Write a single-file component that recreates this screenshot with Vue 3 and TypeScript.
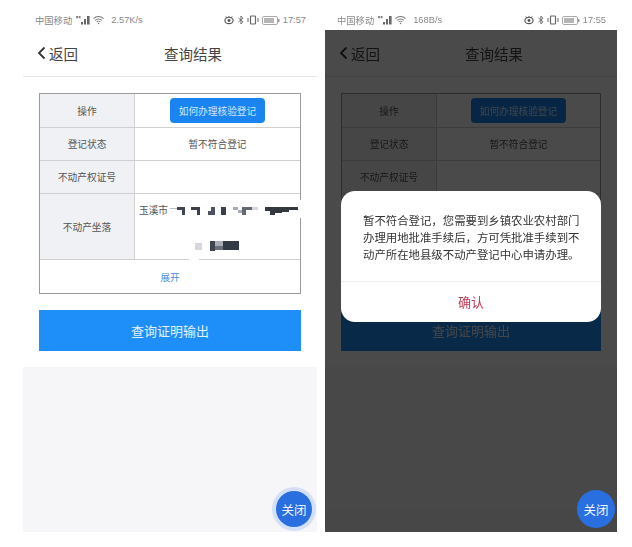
<script setup lang="ts">
interface Phone {
  speed: string
  time: string
  dimmed: boolean
}

const phones: Phone[] = [
  { speed: '2.57K/s', time: '17:57', dimmed: false },
  { speed: '168B/s', time: '17:55', dimmed: true },
]
</script>

<template>
  <div class="screen">
    <section v-for="p in phones" :key="p.time" class="phone" :class="{ dimmed: p.dimmed }">
      <header class="status">
        <span class="carrier">中国移动</span>
        <svg class="signal" width="15" height="10" viewBox="0 0 15 10">
          <path d="M0 1h2v2.200H0zM2.600 1h2v2.200h-2z" fill="#888" />
          <path d="M5 9.500h2V7H5zM8 9.500h2V4H8zM11 9.500h2.600V1H11z" fill="#666" />
        </svg>
        <svg class="wifi" width="11" height="10" viewBox="0 0 12 10" fill="none" stroke="#777" stroke-width="1.100">
          <path d="M.5 3.500c3-3 8-3 11 0M2.300 5.300c2-2 5.400-2 7.400 0M4 7c1-1 3-1 4 0" />
          <circle cx="6" cy="8.700" r=".8" fill="#777" stroke="none" />
        </svg>
        <span class="speed">{{ p.speed }}</span>
        <span class="status-spacer"></span>
        <svg class="s-eye" width="10" height="10" viewBox="0 0 11 10">
          <ellipse cx="5.500" cy="5.500" rx="4.500" ry="3.500" fill="none" stroke="#555" stroke-width="1.300" />
          <circle cx="5.500" cy="5.500" r="1.600" fill="#555" />
          <path d="M2 1l1.500 2M9 1L7.500 3M5.500 .5V2" stroke="#555" />
        </svg>
        <svg class="s-bt" width="6" height="10" viewBox="0 0 6 10" fill="none" stroke="#666" stroke-width=".9">
          <path d="M.5 3l4.500 3.800L2.900 9V1L5 3.200.5 7" />
        </svg>
        <svg class="s-vib" width="12" height="10" viewBox="0 0 12 10" fill="none" stroke="#666">
          <rect x="3.500" y="1" width="5" height="8" rx=".8" stroke-width="1.200" />
          <path d="M1 3v4M11 3v4" />
        </svg>
        <svg class="s-bat" width="18" height="9" viewBox="0 0 18 9">
          <rect x=".5" y=".5" width="15" height="8" rx="1.500" fill="none" stroke="#aaa" />
          <rect x="2" y="2" width="10" height="5" fill="#b5b5b5" />
          <rect x="16" y="3" width="1.500" height="3" fill="#999" />
        </svg>
        <span class="time">{{ p.time }}</span>
      </header>

      <nav class="nav">
        <button class="back" type="button">
          <svg width="9" height="14" viewBox="0 0 9 14" fill="none" stroke="#333" stroke-width="1.800">
            <path d="M7.500 1.500L2 7l5.500 5.500" />
          </svg>
          <span>返回</span>
        </button>
        <h1 class="title">查询结果</h1>
      </nav>

      <main class="content">
        <div class="table">
          <div class="row r-op">
            <div class="label">操作</div>
            <div class="value"><button class="how" type="button">如何办理核验登记</button></div>
          </div>
          <div class="row r-state">
            <div class="label">登记状态</div>
            <div class="value">暂不符合登记</div>
          </div>
          <div class="row r-state">
            <div class="label">不动产权证号</div>
            <div class="value"></div>
          </div>
          <div class="row r-addr">
            <div class="label">不动产坐落</div>
            <div class="value addr">
              <div class="addr-line">
                <span>玉溪市</span>
                <svg class="mosaic" width="131" height="11" viewBox="0 0 131 11">
                  <path d="M2 3h7v1H2z" fill="#b9bcc4" />
                  <path d="M9 2h8v8h-3V5H9z" fill="#3f4450" />
                  <path d="M23 2h9v8h-3V5h-6z" fill="#3b404c" />
                  <path d="M40 6h3V2h4v8h-7z" fill="#4d525e" />
                  <path d="M53 2h5v8h-5z" fill="#3a3f4b" />
                  <path d="M65 2h5v3h-5zM70 5h4v3h-4z" fill="#a6aab4" />
                  <path d="M74 2h10v3h-6v5h-4z" fill="#636874" />
                  <path d="M84 2h6v3h-6z" fill="#d6d8dd" />
                  <path d="M97 2h10v8h-5V6h-5zM107 2h14v5h-7v1h-7zM121 2h9v3h-9z" fill="#33383f" />
                </svg>
              </div>
              <div class="addr-line second">
                <svg class="mosaic" width="46" height="11" viewBox="0 0 46 11">
                  <path d="M0 3h7v7H0z" fill="#d6d8dd" />
                  <path d="M15 1h5v10h-5z" fill="#3e4450" />
                  <path d="M20 1h8v5h-8z" fill="#a9adb6" />
                  <path d="M20 6h8v4h-8z" fill="#6b707c" />
                  <path d="M28 1h16v9H28z" fill="#333a47" />
                </svg>
              </div>
            </div>
            <span class="scratch-side"></span>
            <span class="scratch-bottom"></span>
          </div>
          <div class="expand">展开</div>
        </div>

        <button class="output" type="button">查询证明输出</button>
      </main>

      <div class="fill"></div>

      <div v-if="p.dimmed" class="overlay">
        <div class="modal">
          <p class="modal-text">暂不符合登记，您需要到乡镇农业农村部门办理用地批准手续后，方可凭批准手续到不动产所在地县级不动产登记中心申请办理。</p>
          <button class="confirm" type="button">确认</button>
        </div>
      </div>

      <button class="close" type="button">关闭</button>
    </section>
  </div>
</template>

<style>
html,
body {
  margin: 0;
  background: #fff;
}
</style>

<style scoped>
.screen {
  display: flex;
  gap: 8px;
  width: 632px;
  height: 547px;
  padding-left: 23px;
  box-sizing: border-box;
  font-family: "Noto Sans CJK SC", "Liberation Sans", sans-serif;
  color: #444;
  overflow: hidden;
  filter: blur(0.45px);
}
.phone {
  position: relative;
  display: flex;
  flex-direction: column;
  width: 294px;
  height: 532px;
  background: #fff;
  overflow: hidden;
}
.phone.dimmed {
  width: 292px;
}
.status {
  display: flex;
  align-items: center;
  gap: 2px;
  height: 30px;
  padding: 10px 11px 0 12px;
  box-sizing: border-box;
  font-size: 9.300px;
  color: #888;
  flex: none;
}
.carrier {
  margin-right: 2px;
}
.wifi {
  margin-left: 0;
}
.speed {
  margin-left: 5px;
  font-family: "Liberation Sans", sans-serif;
}
.status-spacer {
  flex: 1;
}
.s-bt {
  margin-left: 2px;
}
.s-vib {
  margin-left: 1px;
}
.s-bat {
  margin-left: 1px;
}
.time {
  margin-left: 1px;
  font-family: "Liberation Sans", sans-serif;
}
.nav {
  position: relative;
  display: flex;
  align-items: center;
  justify-content: center;
  height: 47px;
  border-bottom: 1px solid #e6e6e6;
  box-sizing: border-box;
  flex: none;
}
.back {
  position: absolute;
  left: 14px;
  display: flex;
  align-items: center;
  gap: 3px;
  padding: 0;
  border: 0;
  background: none;
  font: inherit;
  font-size: 14.500px;
  color: #444;
}
.title {
  margin: 0;
  padding-left: 46px;
  font-size: 14.500px;
  font-weight: 400;
  color: #444;
}
.content {
  display: flex;
  flex-direction: column;
  padding: 16px 16px 16px;
  flex: none;
}
.table {
  border: 1px solid #9b9b9b;
  font-size: 9.700px;
}
.row {
  position: relative;
  display: flex;
  box-sizing: border-box;
  border-bottom: 1px solid #d0d0d0;
}
.r-op {
  height: 34px;
}
.r-state {
  height: 33px;
}
.r-addr {
  height: 66px;
}
.label {
  display: flex;
  align-items: center;
  justify-content: center;
  width: 94px;
  flex: none;
  background: #f0f1f4;
  border-right: 1px solid #d0d0d0;
  color: #555;
}
.value {
  display: flex;
  flex: 1;
  align-items: center;
  justify-content: center;
  color: #555;
}
.how {
  width: 95px;
  height: 25px;
  padding: 0;
  border: 0;
  border-radius: 4px;
  background: #1a85f1;
  color: #cfe6fc;
  font: inherit;
}
.addr {
  flex-direction: column;
  align-items: stretch;
  justify-content: flex-start;
  padding: 9px 0 0 4px;
  min-width: 0;
}
.addr-line {
  display: flex;
  align-items: center;
  height: 14px;
  white-space: nowrap;
}
.second {
  justify-content: center;
  margin-top: 21px;
  padding-right: 3px;
}
.mosaic {
  flex: none;
  filter: blur(0.7px);
}
.scratch-side {
  position: absolute;
  right: -2px;
  top: 6px;
  width: 4px;
  height: 18px;
  background: #fff;
}
.scratch-bottom {
  position: absolute;
  left: 149px;
  bottom: -1px;
  width: 10px;
  height: 3px;
  background: #fff;
}
.expand {
  display: flex;
  align-items: center;
  justify-content: center;
  height: 33px;
  color: #3f90dd;
  font-size: 9.500px;
}
.output {
  height: 41px;
  margin-top: 16px;
  padding: 0;
  border: 0;
  background: #1e8ff8;
  color: #e4f1ff;
  font: inherit;
  font-size: 13px;
}
.fill {
  flex: 1;
  background: #f6f6f8;
}
.overlay {
  position: absolute;
  inset: 30px 0 0;
  display: flex;
  justify-content: center;
  padding-top: 161px;
  box-sizing: border-box;
  background: rgba(0, 0, 0, 0.71);
}
.modal {
  display: flex;
  flex-direction: column;
  width: 260px;
  height: 131px;
  border-radius: 14px;
  background: #fff;
  overflow: hidden;
}
.modal-text {
  height: 91px;
  margin: 0;
  padding: 21px 20px 0 22px;
  box-sizing: border-box;
  border-bottom: 1px solid #eee;
  font-size: 11.400px;
  line-height: 17px;
  color: #333;
}
.confirm {
  flex: 1;
  padding: 0 0 2px;
  border: 0;
  background: none;
  color: #c23a55;
  font: inherit;
  font-size: 13px;
}
.close {
  position: absolute;
  left: 253px;
  top: 491px;
  width: 36px;
  height: 36px;
  padding: 0;
  border: 0;
  border-radius: 50%;
  background: #2a6fe0;
  box-shadow: 0 0 0 4px #d3e0f7;
  color: #f2f6ff;
  font: inherit;
  font-size: 12.500px;
}
.dimmed .close {
  left: 252px;
  width: 38px;
  height: 38px;
  top: 490px;
  box-shadow: none;
}
</style>
